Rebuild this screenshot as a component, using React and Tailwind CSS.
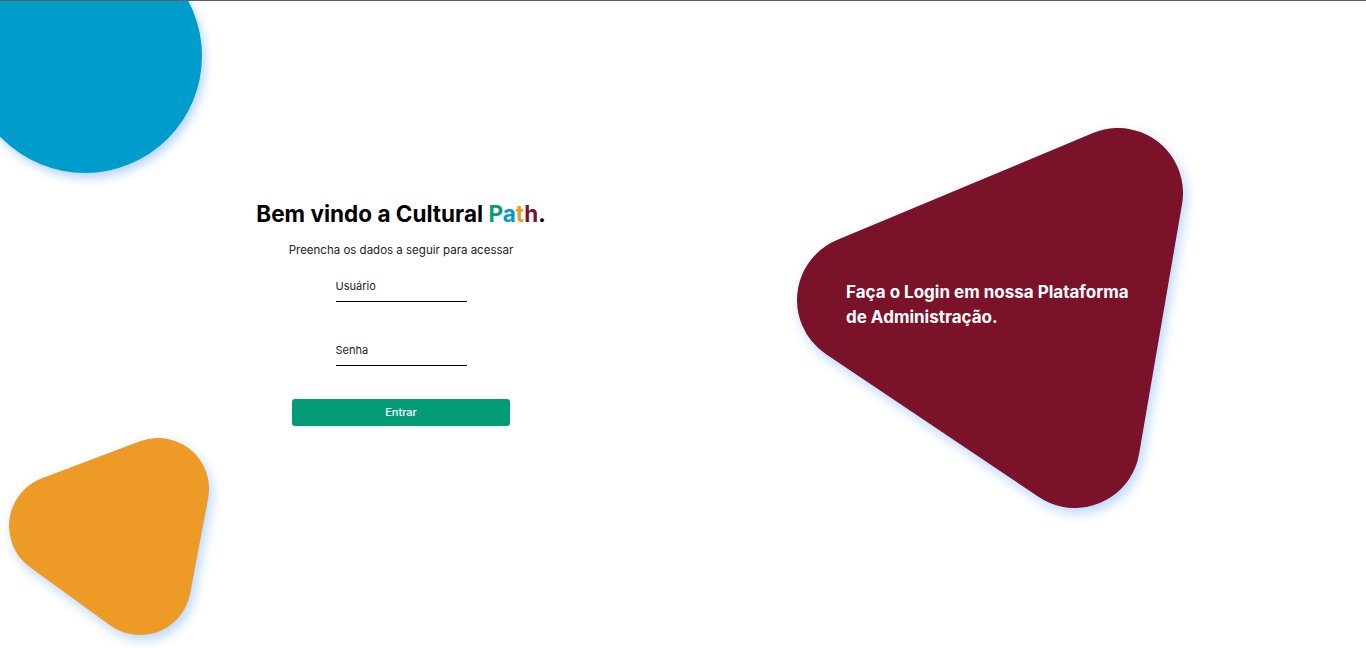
import { useState } from 'react'

const FONT = { fontFamily: 'Inter, "Noto Sans", sans-serif' }

function BlueCircle() {
  return (
    <div className="absolute left-[-32px] top-[-62px] w-[234px] h-[234px] rounded-full bg-[#009ccb] shadow-[3px_5px_10px_rgba(96,165,250,0.45)]" />
  )
}

function OrangeBlob() {
  return (
    <svg
      className="absolute left-0 top-[417px] drop-shadow-[3px_5px_6px_rgba(96,165,250,0.45)]"
      width="240"
      height="229"
      viewBox="0 0 240 229"
    >
      <polygon
        points="158,71 60,108 140,166"
        fill="#ee9a27"
        stroke="#ee9a27"
        strokeWidth="102"
        strokeLinejoin="round"
      />
    </svg>
  )
}

function LoginForm() {
  const [user, setUser] = useState('')
  const [pass, setPass] = useState('')

  return (
    <div className="w-[590px] ml-[106px] pt-[196px] flex flex-col items-center">
      <h1 className="text-[22.5px] leading-[33px] font-bold text-black">
        Bem vindo a Cultural{' '}
        <span className="text-[#0a9b77]">P</span>
        <span className="text-[#009ccb]">a</span>
        <span className="text-[#ee9a27]">t</span>
        <span className="text-[#7a132a]">h</span>.
      </h1>
      <p className="mt-[11px] text-[11.5px] leading-[18px] text-[#222]">
        Preencha os dados a seguir para acessar
      </p>
      <form className="flex flex-col items-center" onSubmit={(e) => e.preventDefault()}>
        <input
          className="mt-[11px] w-[131px] h-[32px] border-b border-black text-[11px] outline-none placeholder:text-[#222]"
          placeholder="Usuário"
          value={user}
          onChange={(e) => setUser(e.target.value)}
        />
        <input
          type="password"
          className="mt-[32px] w-[131px] h-[32px] border-b border-black text-[11px] outline-none placeholder:text-[#222]"
          placeholder="Senha"
          value={pass}
          onChange={(e) => setPass(e.target.value)}
        />
        <button
          type="submit"
          className="mt-[33px] w-[218px] h-[27px] rounded-[3px] bg-[#039c77] text-white text-[11px] font-medium"
        >
          Entrar
        </button>
      </form>
    </div>
  )
}

function AdminPanel() {
  return (
    <div className="relative ml-[90px] mt-[117px] w-[410px] h-[400px]">
      <svg
        className="drop-shadow-[3px_5px_6px_rgba(96,165,250,0.45)]"
        width="410"
        height="400"
        viewBox="0 0 410 400"
      >
        <polygon
          points="332,75 76,182 289,325"
          fill="#7a132a"
          stroke="#7a132a"
          strokeWidth="130"
          strokeLinejoin="round"
        />
      </svg>
      <p className="absolute left-[60px] top-[162px] w-[296px] text-white font-bold text-[17px] leading-[25px]">
        Faça o Login em nossa Plataforma de Administração.
      </p>
    </div>
  )
}

export default function App() {
  return (
    <div
      className="relative h-[648px] w-full overflow-hidden bg-white border-t border-[#5f5f5f]"
      style={FONT}
    >
      <BlueCircle />
      <OrangeBlob />
      <div className="relative flex">
        <LoginForm />
        <AdminPanel />
      </div>
    </div>
  )
}
